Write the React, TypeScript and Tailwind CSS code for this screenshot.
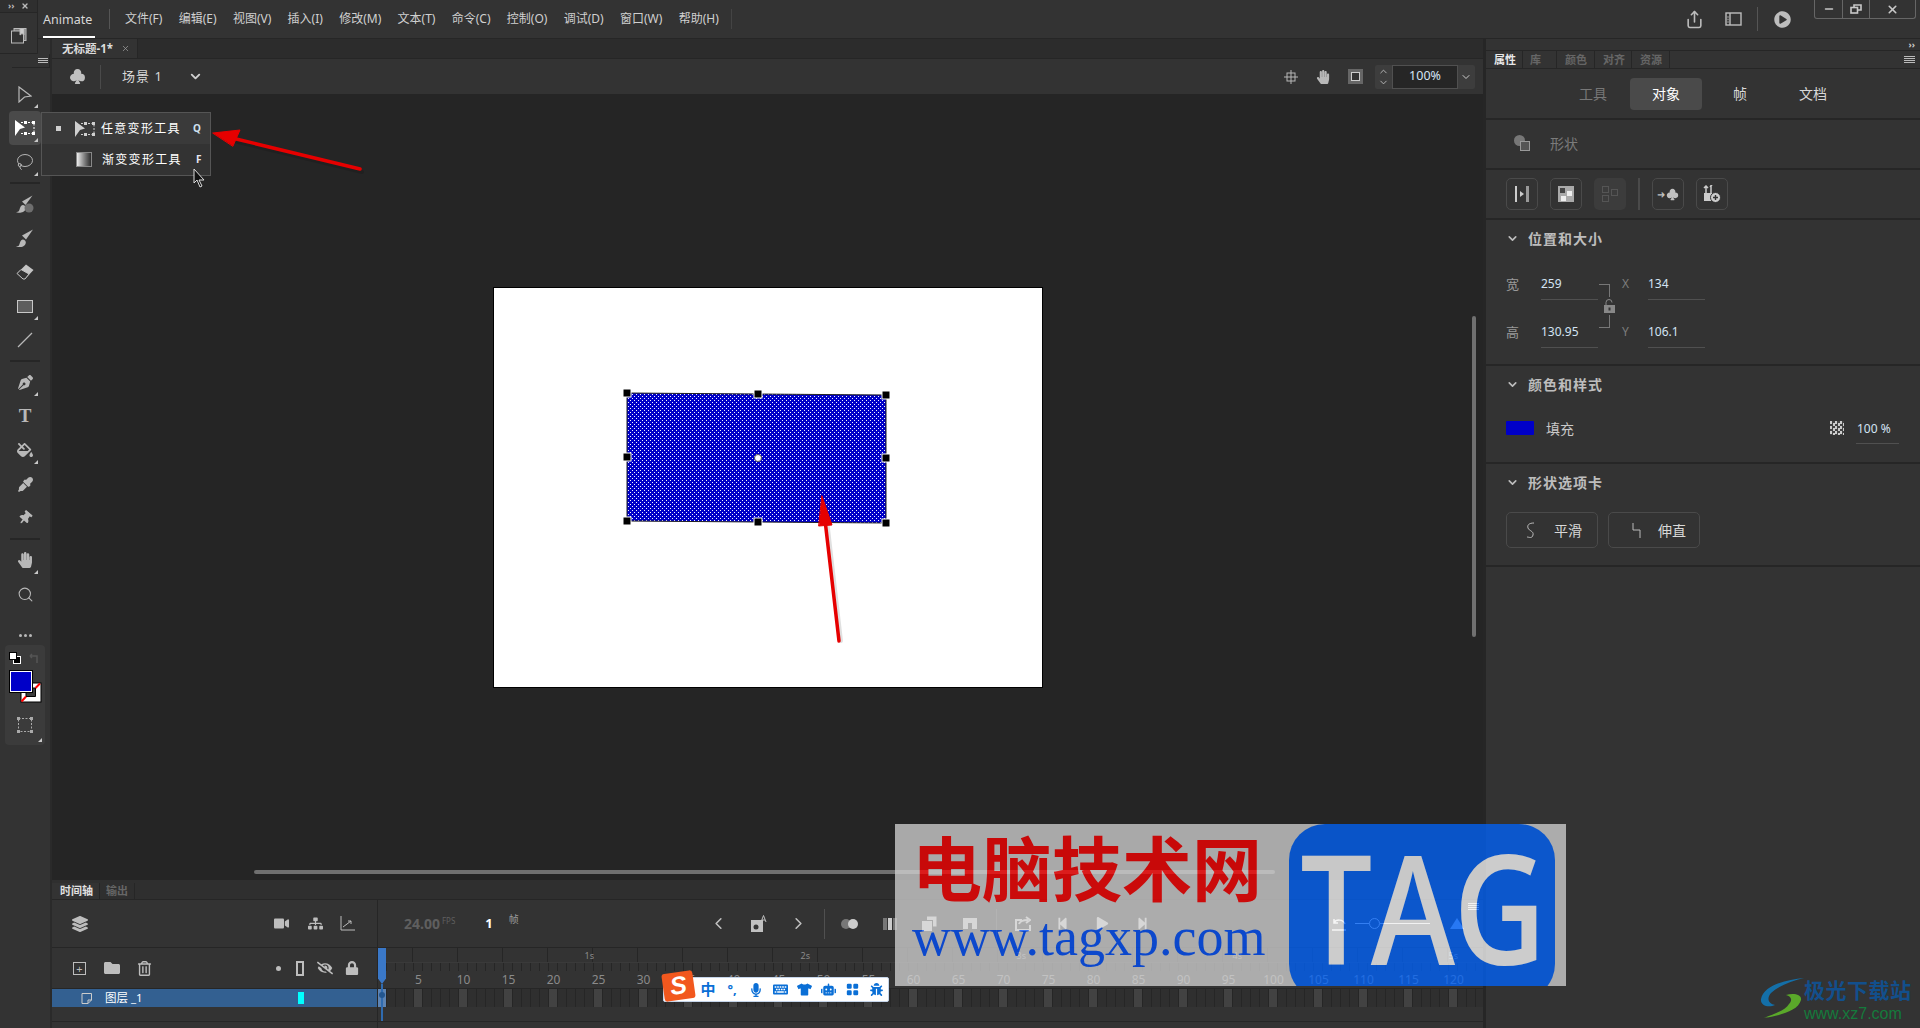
import React from "react";
import { ChevronDown, ChevronLeft, ChevronRight, ChevronUp, X, Minus, Share, Search, Lasso } from "lucide-react";
import { BsSuitClubFill, BsFillGridFill } from "react-icons/bs";
import { FaPenNib, FaFillDrip, FaEyeDropper, FaThumbtack, FaHandPaper, FaLayerGroup, FaVideo, FaSitemap, FaFolder, FaRegTrashAlt, FaEyeSlash, FaLock, FaTshirt, FaRobot, FaKeyboard, FaMicrophone, FaPlay, FaStepBackward, FaStepForward, FaPlayCircle, FaBug } from "react-icons/fa";

const menus = ["文件(F)", "编辑(E)", "视图(V)", "插入(I)", "修改(M)", "文本(T)", "命令(C)", "控制(O)", "调试(D)", "窗口(W)", "帮助(H)"];
const frames = Array.from({ length: 124 }, (_, i) => i + 1);
const labels = Array.from({ length: 24 }, (_, i) => (i + 1) * 5);
const shortTicks = Array.from({ length: 122 }, (_, i) => i);
const longTicks = Array.from({ length: 24 }, (_, i) => i);

function Corner() {
  return <span className="absolute right-[3px] bottom-[3px] w-0 h-0 border-l-[4px] border-l-transparent border-b-[4px] border-b-[#c8c8c8]" />;
}

function Tool({ children, corner, active }: { children: React.ReactNode; corner?: boolean; active?: boolean }) {
  return (
    <div className={"relative w-[32px] h-[34px] mx-[9px] flex items-center justify-center text-[#b8b8b8] rounded " + (active ? "bg-[#4a4a4a] text-white" : "")}>
      {children}
      {corner && <Corner />}
    </div>
  );
}

function Sep() {
  return (
    <div className="h-[8px] flex items-center justify-center">
      <div className="w-[30px] h-[2px] bg-[#262626]" />
    </div>
  );
}

function TransformIcon({ color = "currentColor" }: { color?: string }) {
  return (
    <svg width="20" height="16" viewBox="0 0 20 16" fill="none">
      <path d="M6 2.5H19V13.5H6" stroke={color} strokeDasharray="2 1.5" />
      <rect x="9" y="1" width="3" height="3" fill={color} />
      <rect x="17" y="1" width="3" height="3" fill={color} />
      <rect x="17" y="12" width="3" height="3" fill={color} />
      <rect x="9" y="12" width="3" height="3" fill={color} />
      <path d="M0 0 L10 7.5 L5 9 L0 16 Z" fill={color} />
    </svg>
  );
}

function PropButton({ children, disabled }: { children: React.ReactNode; disabled?: boolean }) {
  return (
    <div className={"w-[32px] h-[32px] rounded-[5px] flex items-center justify-center text-[#c0c0c0] " + (disabled ? "bg-[#3c3c3c]" : "border border-[#4a4a4a]")}>
      {children}
    </div>
  );
}

function Section({ title }: { title: string }) {
  return (
    <div className="flex items-center h-[20px] pl-[20px] gap-[9px] text-[#bdbdbd]">
      <ChevronDown size={13} strokeWidth={3} />
      <span className="text-[14px] font-bold tracking-[1px]">{title}</span>
    </div>
  );
}

function Field({ label, value, axis, axisValue }: { label: string; value: string; axis: string; axisValue: string }) {
  return (
    <div className="flex items-start h-[48px] pl-[20px] text-[12px]">
      <span className="w-[35px] h-[32px] leading-[32px] text-[#9a9a9a] text-[13px]">{label}</span>
      <span className="w-[57px] h-[32px] leading-[32px] border-b border-[#505050] text-[#d4e4f4]">{value}</span>
      <span className="w-[50px] h-[32px] leading-[32px] pl-[24px] text-[#7d7d7d]">{axis}</span>
      <span className="w-[57px] h-[32px] leading-[32px] border-b border-[#505050] text-[#d4e4f4]">{axisValue}</span>
    </div>
  );
}

function Band({ className, children }: { className: string; children?: React.ReactNode }) {
  return <div className={"bg-[#333333] border-b-[2px] border-[#262626] " + className}>{children}</div>;
}

export default function App() {
  return (
    <div className="relative w-[1920px] h-[1028px] overflow-hidden bg-[#333333] text-[#d8d8d8] text-[12px] [font-family:'Noto_Sans','Noto_Sans_CJK_SC',sans-serif]">
      {/* Top bar */}
      <header className="h-[39px] flex items-center border-b border-[#262626] bg-[#333333]">
        <div className="w-[43px] h-full shrink-0" />
        <div className="w-[52px] h-full flex items-center border-b-[2px] border-white text-[12.5px] pt-[5px]">Animate</div>
        <div className="w-[1px] h-[20px] bg-[#555] ml-[14px] mr-[15px]" />
        <nav className="flex gap-[16.3px] text-[#d0d0d0]">
          {menus.map((m) => (
            <span key={m} className="leading-[36px]">{m}</span>
          ))}
        </nav>
        <div className="w-[1px] h-[20px] bg-[#444] ml-[12px]" />
        <div className="flex-1" />
        <div className="flex items-center text-[#bdbdbd] mr-[23px]">
          <Share size={19} className="mr-[21px]" />
          <svg width="17" height="14" viewBox="0 0 17 14" fill="none" stroke="currentColor" strokeWidth="1.4"><rect x="1" y="1" width="15" height="12" /><path d="M5 1v12" /><path d="M2.5 5h1M2.5 7.5h1M2.5 10h1" /></svg>
          <div className="w-[1px] h-[24px] bg-[#555] ml-[15px] mr-[16px]" />
          <FaPlayCircle size={17} />
        </div>
        <div className="self-start flex w-[102px] h-[19px] mr-[4px] border border-t-0 border-[#666] rounded-b-[3px] text-[#c8c8c8]">
          <div className="w-[28px] border-r border-[#666] flex items-center justify-center"><Minus size={12} strokeWidth={3} /></div>
          <div className="w-[27px] border-r border-[#666] flex items-center justify-center">
            <svg width="12" height="10" viewBox="0 0 12 10" fill="none" stroke="currentColor" strokeWidth="1.6"><rect x="1" y="3.5" width="6.5" height="5.5" /><path d="M4 3V1h7v5H8" /></svg>
          </div>
          <div className="flex-1 flex items-center justify-center"><X size={13} strokeWidth={3} /></div>
        </div>
      </header>

      <div className="flex h-[989px]">
        {/* Left toolbar */}
        <aside className="w-[52px] shrink-0 bg-[#333333] border-r-[2px] border-[#2a2a2a] flex flex-col">
          <div className="h-[38px] shrink-0" />
          <Tool corner><svg width="14" height="17" viewBox="0 0 14 17" fill="none" stroke="currentColor" strokeWidth="1.2"><path d="M1 1 L13 10 L6.5 11 L1 16 Z" /></svg></Tool>
          <Tool corner active><TransformIcon color="#ffffff" /></Tool>
          <Tool corner><Lasso size={18} strokeWidth={1.3} /></Tool>
          <Sep />
          <Tool>
            <svg width="18" height="18" viewBox="0 0 18 18" fill="currentColor"><path d="M16.5 0.5 L6 6.5 L9.5 10 Z" /><path d="M0 17c3 0 3-1 4-4 1-3 3-4 5-2 2 2 0 5-2 6S1 18 0 17Z" /><circle cx="13" cy="13" r="4.5" fill="#6e6e6e" /></svg>
          </Tool>
          <Tool>
            <svg width="18" height="18" viewBox="0 0 18 18" fill="currentColor"><path d="M17 0.5 L6 6.5 L10 10.5 Z" /><path d="M0 17.5c3 0 3-1 4-4 1-3 3-4 5-2 2 2 0 5-2 6S1 18.5 0 17.5Z" /></svg>
          </Tool>
          <Tool>
            <svg width="18" height="16" viewBox="0 0 18 16"><path d="M10 0.5 L17.5 6 L9 15 L1 9.5 Z" fill="#c4c4c4" /><path d="M5 5.5 L1 9.5 L7 15 L9 15 L13 10 Z" fill="#333" stroke="#c4c4c4" /></svg>
          </Tool>
          <Tool corner><div className="w-[16px] h-[13px] bg-[#5e5e5e] border border-[#c8c8c8]" /></Tool>
          <Tool><svg width="16" height="16" viewBox="0 0 16 16" stroke="currentColor" strokeWidth="1.2"><path d="M1 15 L15 1" /></svg></Tool>
          <Sep />
          <Tool corner><FaPenNib size={15} /></Tool>
          <Tool><span className="text-[19px] [font-family:'Liberation_Serif',serif] font-bold">T</span></Tool>
          <Tool corner><FaFillDrip size={16} /></Tool>
          <Tool><FaEyeDropper size={15} /></Tool>
          <Tool><FaThumbtack size={14} className="rotate-[40deg]" /></Tool>
          <Sep />
          <Tool corner><FaHandPaper size={16} /></Tool>
          <Tool><Search size={17} strokeWidth={1.5} /></Tool>
          <div className="h-[34px] flex items-end justify-center gap-[2px] pb-[8px] shrink-0">
            <span className="w-[3px] h-[3px] rounded-full bg-[#b8b8b8]" />
            <span className="w-[3px] h-[3px] rounded-full bg-[#b8b8b8]" />
            <span className="w-[3px] h-[3px] rounded-full bg-[#b8b8b8]" />
          </div>
          <div className="relative w-[40px] h-[100px] ml-[5px] rounded-[4px] bg-[#3b3b3b] flex flex-col">
            <div className="flex h-[26px] items-center pl-[4px] gap-[8px]">
              <div className="relative w-[12px] h-[12px]">
                <div className="absolute left-0 top-0 w-[8px] h-[8px] bg-white border border-black z-10" />
                <div className="absolute right-0 bottom-0 w-[8px] h-[8px] bg-black border border-white" />
              </div>
              <svg width="11" height="11" viewBox="0 0 11 11" fill="none" stroke="#555" strokeWidth="1.5"><path d="M1 3h7v7M1 3l2-2M1 3l2 2" /></svg>
            </div>
            <div className="relative h-[34px] ml-[5px]">
              <svg className="absolute left-[10px] top-[11px]" width="22" height="21" viewBox="0 0 22 21">
                <path d="M0.5 0.5H21.5V20.5H0.5Z" fill="#000" />
                <path d="M1.5 1.5H20.5V19.5H1.5Z" fill="#fff" />
                <path d="M6 6H15.5V14.5H6Z" fill="#3b3b3b" stroke="#000" />
                <path d="M15.5 6L20 1.5M6 14.5L1.5 19.5" stroke="#ff0000" strokeWidth="2" />
              </svg>
              <div className="absolute left-0 top-0 w-[22px] h-[21px] bg-[#0000c8] border border-white outline outline-1 outline-black" />
            </div>
            <div className="flex-1 flex items-center justify-center">
              <svg width="16" height="16" viewBox="0 0 16 16" fill="#aaa"><rect x="1.5" y="1.5" width="13" height="13" fill="none" stroke="#aaa" strokeDasharray="2 1.5" /><rect x="0" y="0" width="3" height="3" /><rect x="13" y="0" width="3" height="3" /><rect x="0" y="13" width="3" height="3" /><rect x="13" y="13" width="3" height="3" /></svg>
            </div>
            <Corner />
          </div>
        </aside>

        {/* Center column */}
        <main className="w-[1431px] shrink-0 flex flex-col">
          <div className="h-[20px] bg-[#2c2c2c] border-b border-[#262626] flex shrink-0">
            <div className="w-[86px] h-full bg-[#333333] border-r border-[#262626] flex items-center pl-[10px] gap-[8px]">
              <span className="font-bold text-[11.5px] text-[#dcdcdc] whitespace-nowrap">无标题-1*</span>
              <X size={9} className="text-[#999]" />
            </div>
          </div>
          <div className="h-[35px] bg-[#333333] flex items-center shrink-0 pl-[16px] pr-[8px]">
            <div className="relative w-[18px] flex justify-center text-[#c0c0c0]"><BsSuitClubFill size={17} /></div>
            <div className="w-[1px] h-[24px] bg-[#4a4a4a] ml-[14px] mr-[21px]" />
            <span className="text-[13px] tracking-[1px] w-[66px]">场景 1</span>
            <ChevronDown size={15} strokeWidth={3} className="text-[#d0d0d0]" />
            <div className="flex-1" />
            <div className="flex items-center text-[#b8b8b8] gap-[18px] mr-[12px]">
              <svg width="14" height="14" viewBox="0 0 14 14" fill="none" stroke="currentColor"><rect x="3" y="3" width="8" height="8" /><path d="M7 0v14M0 7h14" /></svg>
              <FaHandPaper size={14} />
              <div className="w-[15px] h-[15px] bg-[#666] flex items-center justify-center"><div className="w-[9px] h-[9px] bg-[#333] border border-[#ccc]" /></div>
            </div>
            <div className="flex items-center h-[24px] w-[100px] bg-[#3d3d3d] rounded-[2px]">
              <div className="w-[17px] flex flex-col items-center text-[#bbb]"><ChevronUp size={11} /><ChevronDown size={11} /></div>
              <div className="w-[66px] h-full bg-[#262626] border border-[#505050] flex items-center justify-center text-[12.5px] text-[#d4e4f4]">100%</div>
              <ChevronDown size={12} className="ml-[2px] text-[#ccc]" />
            </div>
          </div>

          {/* Canvas */}
          <div className="relative flex-1 bg-[#252525] flex items-center justify-center">
            <div className="relative w-[550px] h-[401px] bg-white border border-black">
              <svg className="absolute inset-0" width="550" height="401" viewBox="0 0 550 401">
                <defs>
                  <pattern id="dots" width="4" height="4" patternUnits="userSpaceOnUse">
                    <rect width="4" height="4" fill="#0000c8" />
                    <rect x="0" y="0" width="1" height="1" fill="#f4f4ff" />
                    <rect x="2" y="2" width="1" height="1" fill="#f4f4ff" />
                  </pattern>
                </defs>
                <polygon points="133,105 392,107 392,235 133,233" fill="url(#dots)" stroke="#222" strokeWidth="1" />
                {[[133, 105], [264, 106], [392, 107], [133, 169], [392, 170], [133, 233], [264, 234], [392, 235]].map(([x, y]) => (
                  <rect key={x + "-" + y} x={x - 4} y={y - 4} width="8" height="8" fill="#000" stroke="#fff" strokeWidth="1" />
                ))}
                <circle cx="264" cy="170" r="3.5" fill="#fff" stroke="#555" />
              </svg>
            </div>
            <div className="absolute left-[202px] right-[208px] bottom-[6px] h-[4px] rounded-full bg-[#707070]" />
            <div className="absolute right-[7px] top-[222px] w-[4px] h-[321px] rounded-full bg-[#707070]" />
          </div>

          {/* Timeline */}
          <section className="h-[148px] shrink-0 bg-[#333333] flex flex-col">
            <div className="h-[20px] flex bg-[#2f2f2f] border-b border-[#262626] shrink-0 pt-[3px]">
              <div className="w-[48px] bg-[#333333] pl-[8px] border-r border-[#262626] text-[11px] font-bold text-[#e0e0e0] leading-[16px]">时间轴</div>
              <div className="w-[35px] border-r border-[#262626] pl-[6px] text-[11px] font-bold text-[#666] leading-[16px]">输出</div>
            </div>
            <div className="h-[48px] flex border-b border-[#262626] shrink-0">
              <div className="w-[326px] flex items-center border-r border-[#262626] text-[#bdbdbd]">
                <FaLayerGroup size={16} className="ml-[20px]" />
                <div className="flex-1" />
                <FaVideo size={15} className="mr-[2px]" />
                <FaSitemap size={15} className="ml-[17px]" />
                <svg className="ml-[17px] mr-[22px]" width="15" height="15" viewBox="0 0 15 15" fill="none" stroke="currentColor"><path d="M1 0v14h14" /><path d="M3 11l8-6M8 5h3v3" /></svg>
              </div>
              <div className="flex-1 flex items-center">
                <span className="ml-[26px] text-[14px] font-bold text-[#5f5f5f]">24.00</span>
                <span className="text-[8px] text-[#5f5f5f] self-start mt-[15px] ml-[2px]">FPS</span>
                <span className="ml-[30px] text-[13px] font-bold text-white">1</span>
                <span className="ml-[16px] text-[10px] text-[#9a9a9a] self-start mt-[12px]">帧</span>
                <div className="w-[180px] shrink-0" />
                <div className="flex items-center text-[#c0c0c0]">
                  <div className="w-[40px] flex justify-center"><ChevronLeft size={19} strokeWidth={2} /></div>
                  <div className="w-[40px] flex justify-center">
                    <svg width="18" height="18" viewBox="0 0 18 18"><path d="M1 5H13V17H1Z" fill="#c0c0c0" /><circle cx="6" cy="12" r="2.5" fill="#333" /><path d="M11 7L13.5 0.5L16 7M12 5H15" fill="none" stroke="#c0c0c0" /></svg>
                  </div>
                  <div className="w-[40px] flex justify-center"><ChevronRight size={19} strokeWidth={2} /></div>
                  <div className="w-[1px] h-[30px] bg-[#505050] mx-[5px]" />
                  <div className="w-[40px] flex justify-center"><div className="w-[10px] h-[10px] rounded-full bg-[#777]" /><div className="w-[10px] h-[10px] rounded-full bg-[#ccc] -ml-[3px]" /></div>
                  <div className="w-[40px] flex justify-center gap-[1px]"><div className="w-[4px] h-[12px] bg-[#777]" /><div className="w-[4px] h-[12px] bg-[#ccc]" /><div className="w-[4px] h-[12px] bg-[#777]" /></div>
                  <div className="w-[40px] flex justify-center">
                    <svg width="15" height="15" viewBox="0 0 15 15"><path d="M0 5H10V15H0Z" fill="#ddd" /><path d="M5 0.5H14.5V10.5H11V4H5Z" fill="#ddd" /></svg>
                  </div>
                  <div className="w-[40px] flex justify-center">
                    <svg width="14" height="11" viewBox="0 0 14 11"><path d="M0 0H14V11H9V5H5V11H0Z" fill="#ddd" /></svg>
                  </div>
                  <div className="w-[1px] h-[30px] bg-[#505050] mx-[6px]" />
                  <div className="w-[40px] flex justify-center">
                    <svg width="16" height="15" viewBox="0 0 16 15" fill="none" stroke="#ddd" strokeWidth="2"><path d="M7 4H1V14H15V9" /><path d="M4 8c1-3 4-4 9-4" /><path d="M11 1l4 3-4 3" /></svg>
                  </div>
                  <div className="w-[40px] flex justify-center text-[#ddd]"><FaStepBackward size={13} /></div>
                  <div className="w-[40px] flex justify-center text-[#ddd]"><FaPlay size={13} /></div>
                  <div className="w-[40px] flex justify-center text-[#ddd]"><FaStepForward size={13} /></div>
                </div>
                <div className="flex-1" />
                <svg width="16" height="14" viewBox="0 0 16 14" fill="none" stroke="#ddd" strokeWidth="1.5"><path d="M1 13h14M3 6c2-4 9-4 11 1M3 2v4h4" /></svg>
                <div className="w-[14px] h-[1px] bg-[#ccc] ml-[8px]" />
                <div className="w-[11px] h-[11px] rounded-full border border-[#ccc]" />
                <div className="w-[50px] h-[1px] bg-[#ccc]" />
                <div className="w-0 h-0 ml-[20px] border-x-[7px] border-x-transparent border-b-[11px] border-b-[#9fb7d6]" />
                <div className="flex flex-col gap-[1px] ml-[4px] mr-[4px] self-start mt-[3px]">
                  <div className="w-[11px] h-[1px] bg-[#ccc]" /><div className="w-[11px] h-[1px] bg-[#ccc]" /><div className="w-[11px] h-[1px] bg-[#ccc]" /><div className="w-[11px] h-[1px] bg-[#ccc]" />
                </div>
              </div>
            </div>
            <div className="flex h-[80px] shrink-0">
              <div className="w-[326px] shrink-0 border-r border-[#262626] flex flex-col">
                <div className="h-[41px] flex items-center text-[#bdbdbd] border-b border-[#262626]">
                  <div className="ml-[21px] w-[13px] h-[13px] border border-[#bdbdbd] flex items-center justify-center text-[11px] leading-none">+</div>
                  <FaFolder size={16} className="ml-[18px]" />
                  <FaRegTrashAlt size={15} className="ml-[17px]" />
                  <div className="flex-1" />
                  <div className="w-[5px] h-[5px] rounded-full bg-[#bdbdbd]" />
                  <div className="w-[8px] h-[15px] border-[2px] border-[#bdbdbd] ml-[15px]" />
                  <FaEyeSlash size={16} className="ml-[13px]" />
                  <FaLock size={14} className="ml-[12px] mr-[18px]" />
                </div>
                <div className="h-[18px] bg-[#336091] flex items-center">
                  <svg className="ml-[29px]" width="11" height="11" viewBox="0 0 11 11" fill="none" stroke="#ccc"><path d="M1 .5H10.5V7L7 10.5H1Z" /><path d="M10.5 7H7V10.5" /></svg>
                  <span className="ml-[13px] text-[11.5px] text-white">图层 _1</span>
                  <div className="flex-1" />
                  <div className="w-[6px] h-[12px] bg-[#00ffff] mr-[73px]" />
                </div>
                <div className="h-[15px] border-b border-[#262626]" />
              </div>
              <div className="relative flex-1 overflow-hidden flex flex-col">
                <div className="relative h-[15px] flex border-b border-[#3a3a3a]">
                  <div className="w-[35px] border-r border-[#262626] shrink-0" />
                  {longTicks.map((i) => (
                    <div key={i} className="w-[45px] border-r border-[#262626] shrink-0" />
                  ))}
                  <div className="absolute inset-0 flex text-[9px] text-[#8a8a8a]">
                    {["1s", "2s", "3s", "4s", "5s"].map((s) => (
                      <div key={s} className="w-[216px] text-right leading-[15px] shrink-0">{s}</div>
                    ))}
                  </div>
                </div>
                <div className="h-[8px] flex">
                  {shortTicks.map((i) => (
                    <div key={i} className="w-[9px] border-r border-[#262626] shrink-0" />
                  ))}
                </div>
                <div className="h-[18px] flex pl-[18px] border-b border-[#262626] text-[#8a8a8a] text-[12px] leading-[18px]">
                  {labels.map((n) => (
                    <div key={n} className="w-[45px] text-center shrink-0">{n}</div>
                  ))}
                </div>
                <div className="h-[18px] flex">
                  {frames.map((n) => (
                    <div key={n} className={"w-[9px] h-full shrink-0 border-r border-[#262626] " + (n === 1 ? "bg-[#5d84b4]" : n % 5 === 0 ? "bg-[#424242]" : "bg-[#2f2f2f]")} />
                  ))}
                </div>
                <div className="h-[15px] border-b border-[#262626]" />
                <div className="absolute left-0 top-[0px] w-[8px] h-[36px] bg-[#3a78c8] [clip-path:polygon(0_0,100%_0,100%_85%,50%_100%,0_85%)]" />
                <div className="absolute left-[3px] top-[36px] w-[2px] h-[37px] bg-[#2f6bb0]" />
                <div className="absolute left-[1px] top-[44px] w-[6px] h-[6px] rounded-full bg-[#23568f]" />
              </div>
            </div>
          </section>
        </main>

        <div className="w-[3px] shrink-0 bg-[#262626]" />

        {/* Right panel */}
        <aside className="w-[434px] shrink-0 flex flex-col bg-[#333333]">
          <div className="h-[12px] flex items-center justify-end pr-[5px] border-b border-[#262626] text-[9px] font-bold text-[#ccc] shrink-0 bg-[#333333]">››</div>
          <div className="h-[18px] flex items-center border-b border-[#262626] text-[11px] font-bold text-[#666] shrink-0">
            <div className="w-[37px] h-full bg-[#333333] border-r border-[#262626] pl-[8px] text-[#e8e8e8] leading-[17px]">属性</div>
            <div className="w-[34px] h-full border-r border-[#262626] pl-[7px] leading-[17px]">库</div>
            <div className="w-[38px] h-full border-r border-[#262626] pl-[8px] leading-[17px]">颜色</div>
            <div className="w-[37px] h-full border-r border-[#262626] pl-[8px] leading-[17px]">对齐</div>
            <div className="w-[38px] h-full border-r border-[#262626] pl-[8px] leading-[17px]">资源</div>
            <div className="flex-1" />
            <div className="flex flex-col gap-[1px] mr-[5px]">
              <div className="w-[11px] h-[1px] bg-[#bbb]" /><div className="w-[11px] h-[1px] bg-[#bbb]" /><div className="w-[11px] h-[1px] bg-[#bbb]" /><div className="w-[11px] h-[1px] bg-[#bbb]" />
            </div>
          </div>
          <Band className="h-[51px] flex items-center pl-[70px] text-[14px] shrink-0">
            <span className="w-[74px] text-center text-[#777]">工具</span>
            <span className="w-[72px] h-[32px] rounded-[4px] bg-[#4a4a4a] text-white flex items-center justify-center">对象</span>
            <span className="w-[74px] text-center pl-[2px]">帧</span>
            <span className="w-[74px] text-center">文档</span>
          </Band>
          <Band className="h-[50px] flex items-center pl-[28px] gap-[20px] shrink-0 text-[#7b7b7b] pb-[2px]">
            <div className="relative w-[16px] h-[16px]">
              <div className="absolute left-0 top-0 w-[11px] h-[11px] rounded-full bg-[#777]" />
              <div className="absolute right-0 bottom-0 w-[10px] h-[10px] bg-[#555] border border-[#999]" />
            </div>
            <span className="text-[14px]">形状</span>
          </Band>
          <Band className="h-[50px] flex items-center pl-[20px] shrink-0">
            <div className="flex gap-[12px]">
              <PropButton>
                <svg width="16" height="16" viewBox="0 0 16 16"><rect x="1" y="0" width="2" height="16" fill="#ccc" /><path d="M6 5l4 3-4 3z" fill="#ccc" /><rect x="12" y="0" width="3" height="16" fill="#999" /></svg>
              </PropButton>
              <PropButton>
                <svg width="16" height="16" viewBox="0 0 16 16"><rect width="16" height="16" fill="#aaa" /><rect x="2" y="2" width="5" height="5" fill="#444" /><rect x="9" y="5" width="5" height="5" fill="#eee" /><rect x="3" y="10" width="5" height="5" fill="#eee" /></svg>
              </PropButton>
              <PropButton disabled>
                <svg width="16" height="16" viewBox="0 0 16 16" fill="none" stroke="#555"><rect x="0.5" y="0.5" width="6" height="6" /><rect x="9.5" y="3.5" width="6" height="6" /><rect x="0.5" y="9.5" width="6" height="6" /></svg>
              </PropButton>
            </div>
            <div className="w-[2px] h-[32px] bg-[#4a4a4a] mx-[12px]" />
            <div className="flex gap-[12px]">
              <PropButton><span className="text-[10px] mr-[1px]">➜</span><BsSuitClubFill size={13} /></PropButton>
              <PropButton>
                <svg width="18" height="18" viewBox="0 0 18 18"><path d="M3 1v9M8 0v9M1 3l2-2 2 2M7 2l2-2" stroke="#ccc" strokeWidth="1.5" fill="none" /><rect x="1" y="8" width="9" height="8" fill="#ccc" /><circle cx="12.5" cy="12.5" r="5" fill="#ccc" stroke="#333" /><path d="M10 12.5h5M12.5 10v5" stroke="#333" strokeWidth="1.4" /></svg>
              </PropButton>
            </div>
          </Band>
          <Band className="h-[146px] pt-[8px] shrink-0">
            <Section title="位置和大小" />
            <div className="relative mt-[20px]">
              <Field label="宽" value="259" axis="X" axisValue="134" />
              <Field label="高" value="130.95" axis="Y" axisValue="106.1" />
              <div className="absolute left-[113px] top-[16px] w-[11px] h-[13px] border-t border-r border-[#777]" />
              <div className="absolute left-[113px] top-[47px] w-[11px] h-[13px] border-b border-r border-[#777]" />
              <div className="absolute left-[118px] top-[31px] text-[#888]">
                <svg width="11" height="14" viewBox="0 0 11 14"><path d="M2 6V3.5a3 3 0 0 1 6 0" fill="none" stroke="#888" /><rect y="6" width="11" height="8" fill="#888" /><rect x="4.5" y="8.5" width="2" height="3" fill="#333" /></svg>
              </div>
            </div>
          </Band>
          <Band className="h-[98px] pt-[8px] shrink-0">
            <Section title="颜色和样式" />
            <div className="flex items-center mt-[22px] pl-[20px] h-[24px]">
              <div className="w-[28px] h-[14px] bg-[#0000c8] rounded-[1px]" />
              <span className="ml-[12px] text-[14px] text-[#c8c8c8]">填充</span>
              <div className="flex-1" />
              <div className="w-[14px] h-[14px] bg-[repeating-conic-gradient(#444_0_25%,#ccc_0_50%)] bg-[length:5px_5px]" />
              <span className="ml-[12px] w-[43px] h-[27px] leading-[24px] pl-[1px] mt-[5px] border-b border-[#505050] mr-[21px] text-[#d4e4f4]">100 %</span>
            </div>
          </Band>
          <Band className="h-[103px] pt-[8px] shrink-0">
            <Section title="形状选项卡" />
            <div className="flex gap-[10px] mt-[20px] pl-[20px]">
              <div className="w-[92px] h-[36px] border border-[#4a4a4a] rounded-[5px] flex items-center pl-[19px] gap-[19px] text-[14px]">
                <svg width="9" height="16" viewBox="0 0 9 16" fill="none" stroke="#bbb"><path d="M8 1C3 1 1 3 2 6s6 3 5 7-4 2-6 2" /></svg>
                平滑
              </div>
              <div className="w-[92px] h-[36px] border border-[#4a4a4a] rounded-[5px] flex items-center pl-[23px] gap-[17px] text-[14px]">
                <svg width="9" height="16" viewBox="0 0 9 16" fill="none" stroke="#bbb"><path d="M1 1v7h7v8" /></svg>
                伸直
              </div>
            </div>
          </Band>
          <div className="flex-1" />
        </aside>
      </div>

      {/* Tool flyout */}
      <div className="absolute left-[41px] top-[112px] w-[170px] h-[64px] bg-[#333333] border border-[#555] text-white text-[12px] tracking-[1.3px] flex flex-col">
        <div className="h-[31px] bg-[#3a3a3a] flex items-center">
          <div className="w-[5px] h-[5px] bg-[#cfcfcf] ml-[14px]" />
          <div className="ml-[14px] w-[22px] text-[#cfcfcf]"><TransformIcon /></div>
          <span className="ml-[4px] w-[92px]">任意变形工具</span>
          <span className="text-[10px] font-bold text-[#cfe0f0]">Q</span>
        </div>
        <div className="h-[31px] flex items-center">
          <div className="ml-[34px] w-[16px] h-[15px] border border-[#888] bg-gradient-to-r from-[#eeeeee] to-[#2d2d2d]" />
          <span className="ml-[10px] w-[94px]">渐变变形工具</span>
          <span className="text-[10px] font-bold text-[#e8e8f0]">F</span>
        </div>
      </div>

      {/* Mouse pointer */}
      <svg className="absolute left-[193px] top-[168px]" width="12" height="20" viewBox="0 0 12 20"><path d="M1 1v14l3-3 3 7 2-1-3-6h5z" fill="#111" stroke="#ddd" strokeWidth="1" /></svg>

      {/* Floating toolbar header */}
      <div className="absolute left-0 top-0 w-[38px] h-[54px] bg-[#333333] border-r border-b border-[#262626] rounded-br-[2px] flex flex-col">
        <div className="h-[13px] bg-[#2f2f2f] border-b border-[#262626] flex items-center justify-between px-[8px] text-[9px] font-bold text-[#bbb]">
          <span>››</span>
          <X size={8} strokeWidth={4} />
        </div>
        <div className="flex-1 flex items-center justify-center pt-[6px]">
          <svg width="16" height="16" viewBox="0 0 16 16" fill="none" stroke="#bbb"><rect x="3" y="0.5" width="12" height="12" fill="#777" /><rect x="0.5" y="3" width="12" height="12" fill="#333" /><path d="M9 1v6l2-1.5L13 7V1" fill="#ccc" /></svg>
        </div>
      </div>
      <div className="absolute left-[12px] top-[54px] w-[38px] h-[14px] border-r border-b border-[#262626] flex justify-end items-center pr-[1px]">
        <div className="flex flex-col gap-[1px]">
          <div className="w-[10px] h-[1px] bg-[#bbb]" /><div className="w-[10px] h-[1px] bg-[#bbb]" /><div className="w-[10px] h-[1px] bg-[#bbb]" />
        </div>
      </div>

      {/* Annotation arrows */}
      <svg className="absolute inset-0 pointer-events-none" width="1920" height="1028" viewBox="0 0 1920 1028">
        <g fill="none" stroke="#000" strokeOpacity="0.12" strokeLinecap="round">
          <path d="M362 172 L234 141" strokeWidth="4" />
          <path d="M841 641 L827 520" strokeWidth="4" />
        </g>
        <g fill="#e60000" stroke="#e60000" strokeLinecap="round">
          <path d="M360 169 L232 138" strokeWidth="3.5" />
          <path d="M213 133 L240 130 L233 146 Z" strokeWidth="1" />
          <path d="M839 641 L825 520" strokeWidth="3.5" />
          <path d="M822 496 L832 525 L819 526 Z" strokeWidth="1" />
        </g>
      </svg>

      {/* Site watermark */}
      <div className="absolute left-[895px] top-[824px] w-[671px] h-[162px] overflow-hidden bg-[#d5d5d5] opacity-75 flex">
        <div className="w-[394px] shrink-0 pl-[17px] flex flex-col">
          <div className="h-[84px] pt-[4px] text-[70px] leading-[76px] font-bold text-[#ff0000] [font-family:'Noto_Sans_CJK_SC',sans-serif] whitespace-nowrap">电脑技术网</div>
          <div className="text-[54px] leading-[60px] text-[#0050ff] [font-family:'Liberation_Serif',serif] whitespace-nowrap -mt-[1px]">www.tagxp.com</div>
        </div>
        <div className="w-[266px] h-[176px] shrink-0 rounded-[36px] bg-[#0064ff] flex items-start justify-center overflow-hidden">
          <span className="text-[152px] leading-[160px] mt-[3px] font-semibold text-white scale-x-[0.84] [font-family:'Open_Sans',sans-serif] tracking-[-2px]">TAG</span>
        </div>
      </div>

      {/* IME bar */}
      <div className="absolute left-[663px] top-[972px] w-[226px] h-[30px] flex items-end">
        <div className="absolute left-0 top-0 w-[31px] h-[28px] bg-[#f2581e] rounded-[3px] -rotate-[8deg] flex items-center justify-center text-white text-[25px] font-bold italic [font-family:'Liberation_Sans',sans-serif] z-10">S</div>
        <div className="w-full h-[25px] bg-white rounded-[2px] border border-[#c5d5ea] flex items-center pl-[36px] text-[#0a6fd6] gap-[8px]">
          <span className="w-[16px] text-center text-[15px] font-bold leading-none">中</span>
          <span className="w-[16px] text-center text-[13px] font-bold leading-none">°,</span>
          <div className="w-[16px] flex justify-center"><FaMicrophone size={14} /></div>
          <div className="w-[16px] flex justify-center"><FaKeyboard size={15} /></div>
          <div className="w-[16px] flex justify-center"><FaTshirt size={15} /></div>
          <div className="w-[16px] flex justify-center"><FaRobot size={15} /></div>
          <div className="w-[16px] flex justify-center"><BsFillGridFill size={13} /></div>
          <div className="w-[16px] flex justify-center"><FaBug size={13} /></div>
        </div>
      </div>

      {/* Download-site watermark */}
      <div className="absolute left-[1760px] top-[977px] flex items-start">
        <svg width="45" height="42" viewBox="0 0 45 42" fill="none">
          <path d="M44 1C26 3 4 8 1 22c-1 7 8 9 14 6C9 27 6 22 11 16 18 9 32 4 44 1Z" fill="#146fa8" />
          <path d="M4 41c12-2 34-6 37-18 1-6-8-7-15-5 5 1 7 5 3 9C26 33 14 37 4 41Z" fill="#5aa82a" />
        </svg>
        <div className="flex flex-col ml-[-1px]">
          <span className="text-[21px] leading-[24px] font-bold text-[#124f8c] tracking-[0.5px] [font-family:'Noto_Sans_CJK_SC',sans-serif] whitespace-nowrap">极光下载站</span>
          <span className="text-[16px] leading-[20px] text-[#157a3c] [font-family:'Liberation_Sans',sans-serif] mt-[3px]">www.xz7.com</span>
        </div>
      </div>
    </div>
  );
}
